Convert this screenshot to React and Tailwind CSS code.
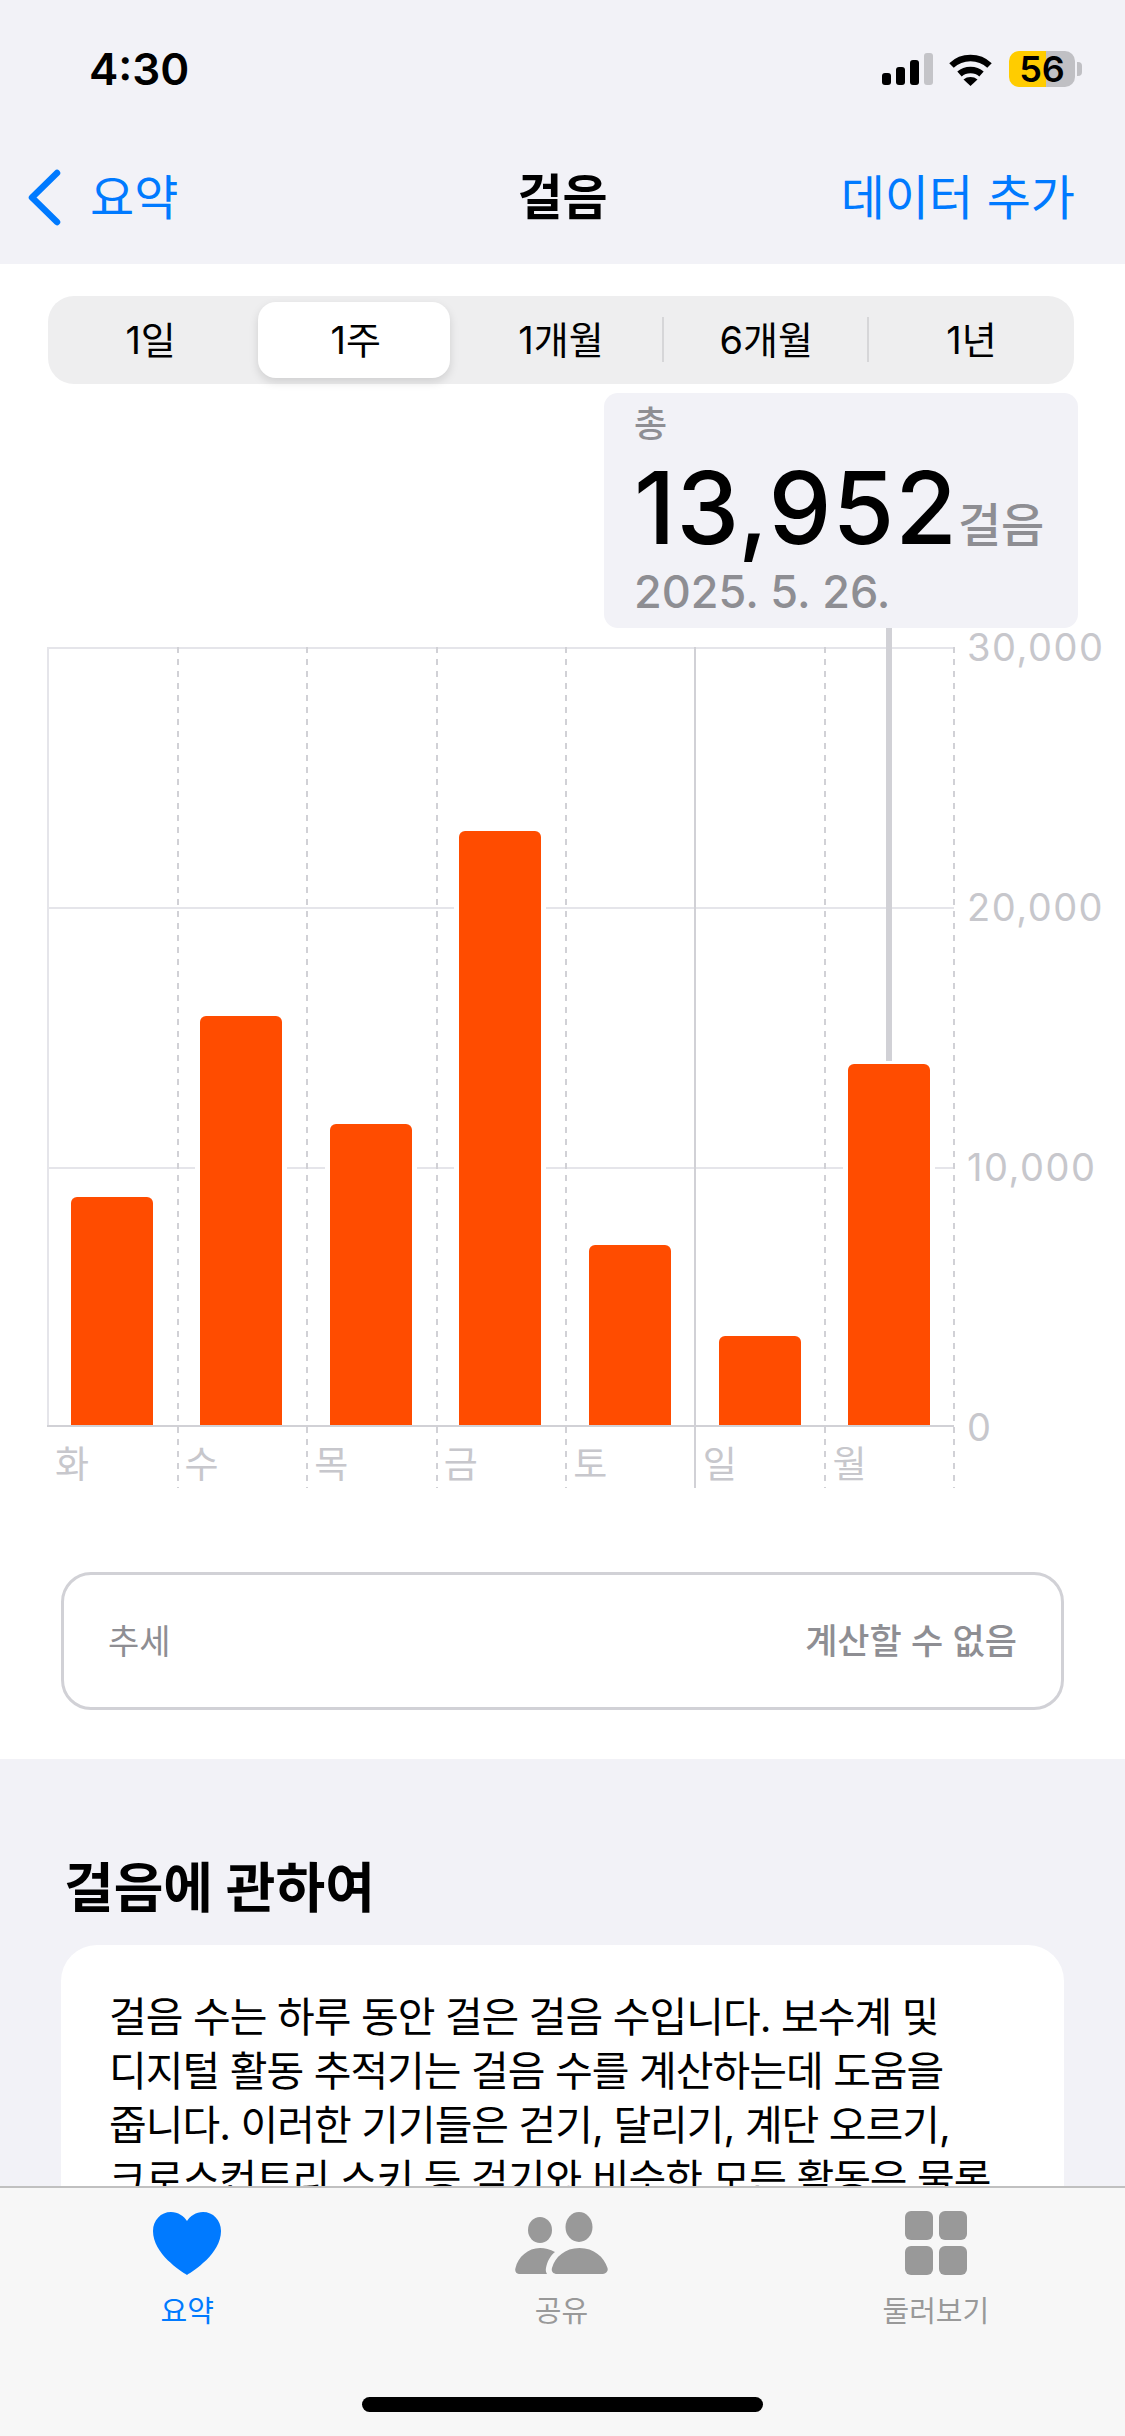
const steps = [
  { day: "화", value: 8819 },
  { day: "수", value: 15790 },
  { day: "목", value: 11630 },
  { day: "금", value: 22914 },
  { day: "토", value: 6970 },
  { day: "일", value: 3466 },
  { day: "월", value: 13952 },
];

const PLOT_HEIGHT = 779;
const MAX_STEPS = 30000;

function StatusBar() {
  return (
    <div className="flex h-[138px] items-center justify-between pl-[89px] pr-[43px]">
      <span className="text-[44px] leading-none font-semibold text-black">4:30</span>
      <div className="flex items-center">
        {/* signal */}
        <div className="flex items-end gap-[5px]">
          <div className="h-[12px] w-[9px] rounded-[3px] bg-black"></div>
          <div className="h-[18px] w-[9px] rounded-[3px] bg-black"></div>
          <div className="h-[25px] w-[9px] rounded-[3px] bg-black"></div>
          <div className="h-[32px] w-[9px] rounded-[3px] bg-[#c4c4c8]"></div>
        </div>
        {/* wifi */}
        <svg className="ml-[15px]" width="45" height="33" viewBox="0 0 45 33" fill="none">
          <path d="M3.5 12.5C14 2.5 31 2.5 41.5 12.5" stroke="#000" strokeWidth="6.5" />
          <path d="M11.5 21C17.5 15.5 27.5 15.5 33.5 21" stroke="#000" strokeWidth="6.5" />
          <path d="M22.5 33L15.5 26.5C19.5 23.2 25.5 23.2 29.5 26.5Z" fill="#000" />
        </svg>
        {/* battery */}
        <div className="ml-[16px] flex h-[36px] w-[66px] items-center justify-center rounded-[10px] bg-[linear-gradient(90deg,#ffcc00_0_37px,#c0c0c4_37px)] text-[36px] leading-none font-semibold text-black">
          56
        </div>
        <div className="ml-[2px] h-[14px] w-[5px] rounded-r-[4px] bg-[#c0c0c4]"></div>
      </div>
    </div>
  );
}

function NavBar() {
  return (
    <div className="relative flex h-[126px] items-start justify-between pl-[27px] pr-[50px]">
      <div className="flex items-center pt-[31px]">
        <svg width="34" height="57" viewBox="0 0 34 57" fill="none">
          <path d="M30 4L5 28.5L30 53" stroke="#007aff" strokeWidth="6.5" strokeLinecap="round" strokeLinejoin="round" />
        </svg>
        <span className="ml-[29px] text-[48px] leading-[57px] text-[#007aff]">요약</span>
      </div>
      <span className="absolute left-0 right-0 top-[31px] text-center text-[49px] leading-[57px] font-semibold text-black">
        걸음
      </span>
      <span className="pt-[31px] text-[48px] leading-[57px] text-[#007aff]">데이터 추가</span>
    </div>
  );
}

function RangePicker() {
  const ranges = ["1일", "1주", "1개월", "6개월", "1년"];
  return (
    <div className="mx-[48px] grid h-[88px] w-[1026px] grid-cols-5 rounded-[26px] bg-[#eeeeef]">
      {ranges.map((r, i) => (
        <div key={r} className="relative flex items-center justify-center text-[38px] text-black">
          {i === 1 && (
            <div className="absolute inset-y-[6px] left-[5px] right-[8px] rounded-[18px] bg-white shadow-[0_4px_10px_rgba(0,0,0,0.13)]"></div>
          )}
          {i > 2 && <div className="absolute left-[-2px] top-[21px] h-[45px] w-[2px] bg-[#d6d6d8]"></div>}
          <span className="relative">{r}</span>
        </div>
      ))}
    </div>
  );
}

function Callout() {
  return (
    <div className="ml-auto mr-[47px] mt-[9px] h-[235px] w-[474px] rounded-[14px] bg-[#f2f2f7] pl-[30px] pt-[9px]">
      <div className="text-[36px] leading-[44px] font-medium text-[#8e8e93]">총</div>
      <div className="mt-[12px] flex h-[100px] items-end">
        <span className="text-[100px] leading-[100px] font-medium tracking-[1px] text-black">13,952</span>
        <span className="mb-[10px] text-[47px] leading-none font-medium text-[#8e8e93]">걸음</span>
      </div>
      <div className="mt-[8px] text-[45px] leading-[52px] font-medium text-[#8e8e93]">2025. 5. 26.</div>
    </div>
  );
}

function StepsChart() {
  return (
    <div className="ml-[47px] mt-[19px] flex">
      <div className="relative grid h-[841px] w-[907px] grid-cols-7">
        {/* horizontal grid lines */}
        <div className="absolute left-0 right-0 top-0 h-[2px] bg-[#e5e5ea]"></div>
        <div className="absolute left-0 right-0 top-[260px] h-[2px] bg-[#e5e5ea]"></div>
        <div className="absolute left-0 right-0 top-[520px] h-[2px] bg-[#e5e5ea]"></div>
        {steps.map((s, i) => (
          <div key={s.day} className="relative">
            {/* column divider */}
            {i === 0 && <div className="absolute left-0 top-0 h-[779px] w-[2px] bg-[#e5e5ea]"></div>}
            {i === 5 && <div className="absolute left-[-1px] top-0 h-full w-[2px] bg-[#d1d1d6]"></div>}
            {i !== 0 && i !== 5 && (
              <div className="absolute left-0 top-0 h-full w-[2px] bg-[repeating-linear-gradient(to_bottom,#d1d1d6_0_6px,transparent_6px_12px)]"></div>
            )}
            {i === 6 && (
              <div className="absolute right-[-1px] top-0 h-full w-[2px] bg-[repeating-linear-gradient(to_bottom,#d1d1d6_0_6px,transparent_6px_12px)]"></div>
            )}
            <div className="flex h-[779px] items-end justify-center">
              <div className="relative bg-white px-[5px]">
                {i === 6 && (
                  <div className="absolute bottom-[365px] left-1/2 ml-[-3px] h-[433px] w-[6px] bg-[#d1d1d6]"></div>
                )}
                <div
                  className="w-[82px] rounded-t-[6px] bg-[#ff4c00]"
                  style={{ height: Math.round((s.value / MAX_STEPS) * PLOT_HEIGHT) }}
                ></div>
              </div>
            </div>
            <div className="relative mt-[19px] pl-[8px] text-[37px] leading-[40px] text-[#c7c7cc]">{s.day}</div>
          </div>
        ))}
        <div className="absolute left-0 right-0 top-[778px] h-[2px] bg-[#d1d1d6]"></div>
      </div>
      {/* y axis */}
      <div className="ml-[13px] flex h-[780px] flex-col justify-between text-[38px] tracking-[1.5px] text-[#c7c7cc]">
        {["30,000", "20,000", "10,000", "0"].map((t) => (
          <div key={t} className="flex h-0 items-center">
            {t}
          </div>
        ))}
      </div>
    </div>
  );
}

function TabItem({ label, active, children }) {
  return (
    <div className="flex flex-col items-center">
      <div className="flex h-[64px] items-center justify-center">{children}</div>
      <span className={`mt-[20px] text-[29px] leading-[34px] ${active ? "text-[#007aff]" : "text-[#999999]"}`}>
        {label}
      </span>
    </div>
  );
}

function TabBar() {
  return (
    <div className="absolute bottom-0 left-0 right-0 flex h-[250px] flex-col items-center justify-between border-t-2 border-[#c0c0c0] bg-[#f7f7f7] pb-[24px] pt-[23px]">
      <div className="grid w-full grid-cols-3 pr-[2px]">
        <TabItem label="요약" active>
          <svg width="68" height="63" viewBox="0 0 68 63">
            <path
              d="M34 63C28 59 0 42 0 19C0 8 8 0 18 0C25 0 31 4 34 9C37 4 43 0 50 0C60 0 68 8 68 19C68 42 40 59 34 63Z"
              fill="#007aff"
            />
          </svg>
        </TabItem>
        <TabItem label="공유">
          <svg width="93" height="62" viewBox="0 0 93 62" fill="#999999">
            <ellipse cx="25" cy="18" rx="12" ry="13" />
            <ellipse cx="64" cy="15" rx="13.5" ry="15" />
            <path d="M42 62C38 62 36 59 37 56C40 45 50 36 64.5 36C79 36 89 45 92.5 56C93.5 59 91 62 88 62Z" />
            <path d="M4 62C1 62 -0.5 59 0.5 56C3 45 13 36 25 36C30 36 35 37.5 40 40C35 44 32 50 31 56C30.5 59 31 60 32 62Z" />
          </svg>
        </TabItem>
        <TabItem label="둘러보기">
          <div className="grid grid-cols-[28px_28px] grid-rows-[29px_29px] gap-[6px]">
            <div className="rounded-[6px] bg-[#999999]"></div>
            <div className="rounded-[6px] bg-[#999999]"></div>
            <div className="rounded-[6px] bg-[#999999]"></div>
            <div className="rounded-[6px] bg-[#999999]"></div>
          </div>
        </TabItem>
      </div>
      <div className="h-[15px] w-[401px] rounded-full bg-black"></div>
    </div>
  );
}

export default function App() {
  return (
    <div className="relative h-[2436px] w-[1125px] overflow-hidden bg-[#f2f2f7] font-[Inter,'Noto_Sans_CJK_KR',sans-serif]">
      <StatusBar />
      <NavBar />

      <div className="bg-white pb-[49px] pt-[32px]">
        <RangePicker />
        <Callout />
        <StepsChart />

        <div className="mx-[61px] mt-[84px] flex h-[138px] items-center justify-between rounded-[30px] border-[3px] border-[#d1d1d6] px-[44px]">
          <span className="text-[34px] text-[#8e8e93]">추세</span>
          <span className="text-[35px] font-medium text-[#8e8e93]">계산할 수 없음</span>
        </div>
      </div>

      <div className="px-[61px] pt-[100px]">
        <h2 className="ml-[3px] text-[54px] leading-[60px] font-bold text-black">걸음에 관하여</h2>
        <div className="mt-[26px] rounded-[36px] bg-white px-[48px] pb-[40px] pt-[45px] text-[41px] leading-[54px] tracking-[-1px] text-black">
          <div className="whitespace-nowrap">걸음 수는 하루 동안 걸은 걸음 수입니다. 보수계 및</div>
          <div className="whitespace-nowrap">디지털 활동 추적기는 걸음 수를 계산하는데 도움을</div>
          <div className="whitespace-nowrap">줍니다. 이러한 기기들은 걷기, 달리기, 계단 오르기,</div>
          <div className="whitespace-nowrap">크로스컨트리 스키 등 걷기와 비슷한 모든 활동은 물론</div>
        </div>
      </div>

      <TabBar />
    </div>
  );
}
